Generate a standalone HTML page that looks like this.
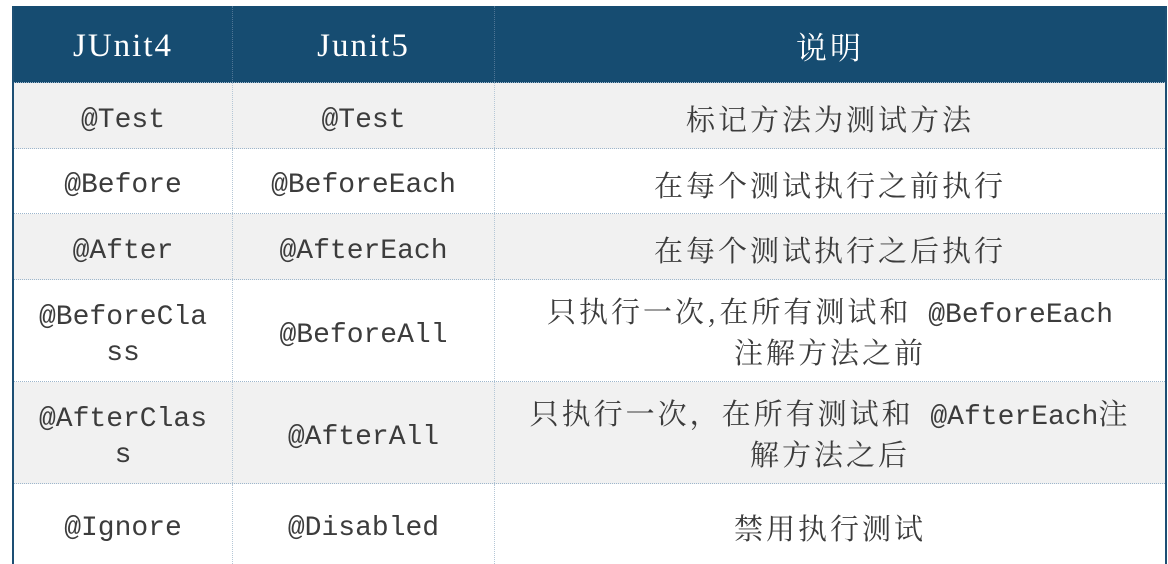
<!DOCTYPE html>
<html><head><meta charset="utf-8"><style>
body{margin:0;width:1168px;height:556px;background:#fff;overflow:hidden;position:relative;font-family:"Liberation Mono","Noto Serif CJK SC",monospace;}
.t{position:absolute;left:12px;top:6px;width:1151px;border-left:2px solid #1d4f74;border-right:2px solid #1d4f74;}
.r{display:flex;border-bottom:1px dotted #9db6cc;box-sizing:border-box;}
.c{display:flex;align-items:center;justify-content:center;text-align:center;border-right:1px dotted #b5c7d6;color:#3c3c3c;font-size:28px;line-height:36px;box-sizing:border-box;padding-top:10px;}
.c:last-child{border-right:none;}
.c1{width:219px}.c2{width:262px}.c3{flex:1}
.h{background:#164c71;height:77px;}
.h .c{color:#fff;font-family:"Liberation Serif","Noto Serif CJK SC",serif;font-size:33px;letter-spacing:2px;border-right-color:#4f7595;padding-top:4px;}
.g{background:#f1f1f1}
.z{font-family:"Noto Serif CJK SC",serif;font-size:29px;letter-spacing:3px;}
.c3{padding-top:7px}
</style></head><body>
<div class="t">
<div class="r h"><div class="c c1">JUnit4</div><div class="c c2">Junit5</div><div class="c c3"><span class="z" style="font-size:31px">说明</span></div></div>
<div class="r g" style="height:66px"><div class="c c1">@Test</div><div class="c c2">@Test</div><div class="c c3"><span class="z">标记方法为测试方法</span></div></div>
<div class="r" style="height:65px"><div class="c c1">@Before</div><div class="c c2">@BeforeEach</div><div class="c c3"><span class="z">在每个测试执行之前执行</span></div></div>
<div class="r g" style="height:66px"><div class="c c1">@After</div><div class="c c2">@AfterEach</div><div class="c c3"><span class="z">在每个测试执行之后执行</span></div></div>
<div class="r" style="height:102px"><div class="c c1">@BeforeCla<br>ss</div><div class="c c2">@BeforeAll</div><div class="c c3"><div><span class="z">只执行一次,在所有测试和</span> @BeforeEach<br><span class="z">注解方法之前</span></div></div></div>
<div class="r g" style="height:102px"><div class="c c1">@AfterClas<br>s</div><div class="c c2">@AfterAll</div><div class="c c3"><div><span class="z">只执行一次，在所有测试和</span> @AfterEach<span class="z">注</span><br><span class="z">解方法之后</span></div></div></div>
<div class="r" style="height:80px;border-bottom:none"><div class="c c1">@Ignore</div><div class="c c2">@Disabled</div><div class="c c3"><span class="z">禁用执行测试</span></div></div>
</div>
</body></html>
